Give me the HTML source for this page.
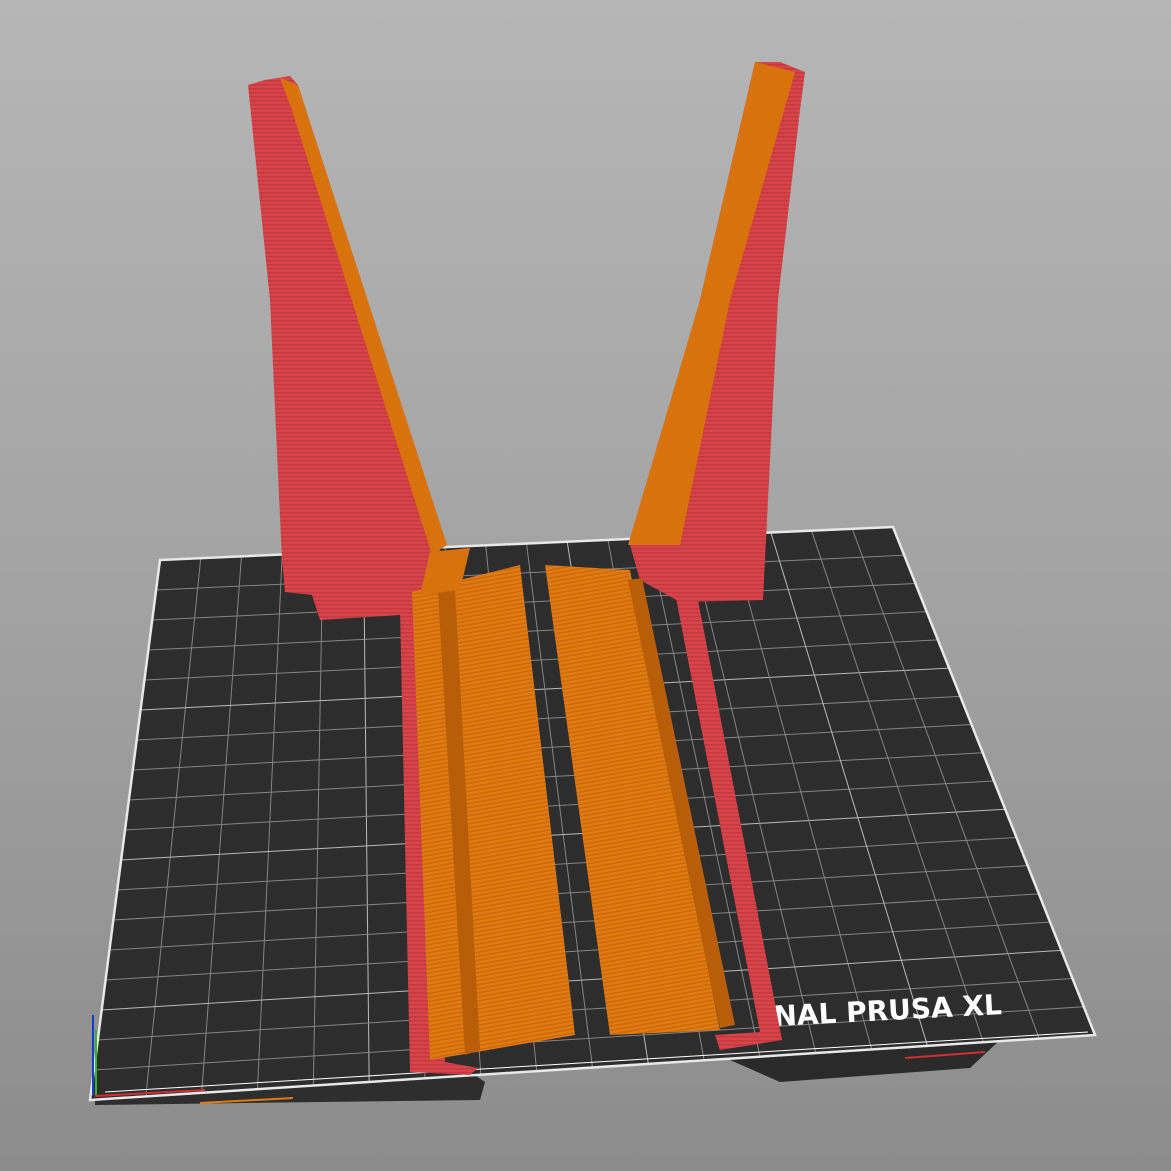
<!DOCTYPE html>
<html><head><meta charset="utf-8"><style>
html,body{margin:0;padding:0;width:1171px;height:1171px;overflow:hidden}
body{background:linear-gradient(#b6b6b6,#a3a3a3 50%,#8c8c8c)}
svg{display:block}
</style></head><body>
<svg id="s" width="1171" height="1171" viewBox="0 0 1171 1171" xmlns="http://www.w3.org/2000/svg">
<defs>
<pattern id="red" width="4" height="4" patternUnits="userSpaceOnUse"><rect width="4" height="4" fill="#d8444a"/><rect width="4" height="1.5" fill="#c23a40"/></pattern>
<pattern id="or" width="4" height="4" patternUnits="userSpaceOnUse" patternTransform="rotate(80)"><rect width="4" height="4" fill="#e07a12"/><rect width="1.5" height="4" fill="#c96a0a"/></pattern>
</defs>
<polygon points="95,1098 470,1072 485,1082 480,1100 95,1105" fill="#2e2e2e"/>
<polygon points="730,1060 1000,1040 970,1068 780,1082" fill="#2a2a2a"/>
<polygon points="160,560 893,527 1095,1035 90,1100" fill="#2d2d2d"/>
<g id="grid" stroke="#9a9a9a" stroke-width="1" opacity="0.8"></g>
<polygon points="160,560 893,527 1095,1035 90,1100" fill="none" stroke="#e8e8e8" stroke-width="2.5"/>
<line x1="105" y1="1092" x2="1088" y2="1032" stroke="#fff" stroke-width="1"/>
<text x="774" y="1026" fill="#fff" font-family="DejaVu Sans,Liberation Sans,sans-serif" font-weight="bold" font-size="28" transform="rotate(-3 774 1026)">NAL PRUSA XL</text>
<!-- left tower -->
<polygon points="248,85 265,80 290,76 298,85 440,545 440,560 430,600 400,615 320,620 312,595 285,592 282,560 270,300" fill="url(#red)"/>
<polygon points="280,78 298,85 447,545 432,555 292,110" fill="#d8720c"/>
<!-- right tower -->
<polygon points="755,62 780,62 805,72 800,110 778,300 763,600 680,602 640,580 630,545 700,300" fill="url(#red)"/>
<polygon points="755,62 795,72 730,300 680,545 628,545 700,300" fill="#d8720c"/>
<!-- left bar -->
<polygon points="400,610 432,595 445,1062 478,1068 470,1075 410,1072" fill="url(#red)"/>
<polygon points="412,592 520,565 575,1035 430,1060" fill="url(#or)"/>
<polygon points="438,592 455,590 480,1050 465,1055" fill="#b85e08"/>
<polygon points="430,552 470,548 460,590 420,595" fill="#d8720c"/>
<!-- right bar -->
<polygon points="676,598 698,600 782,1040 720,1050 715,1035 760,1032" fill="url(#red)"/>
<polygon points="545,565 630,570 720,1030 610,1035" fill="url(#or)"/>
<polygon points="628,580 642,578 735,1025 720,1028" fill="#b85e08"/>
<line x1="93" y1="1095" x2="93" y2="1015" stroke="#1a3bd0" stroke-width="2"/>
<line x1="96" y1="1095" x2="96" y2="1030" stroke="#2eb82e" stroke-width="2"/>
<line x1="95" y1="1096" x2="205" y2="1090" stroke="#d03030" stroke-width="2"/>
<line x1="200" y1="1103" x2="293" y2="1098" stroke="#e07a12" stroke-width="2"/>
<line x1="905" y1="1058" x2="985" y2="1052" stroke="#d03030" stroke-width="2"/>
</svg>
<script>
var g=document.getElementById('grid'),TL=[160,560],TR=[893,527],BR=[1095,1035],BL=[90,1100],N=18;
function L(a,b,t){return [a[0]+(b[0]-a[0])*t,a[1]+(b[1]-a[1])*t]}
for(var i=1;i<N;i++){var t=i/N;
var p=L(TL,TR,t),q=L(BL,BR,t);
var l=document.createElementNS('http://www.w3.org/2000/svg','line');
l.setAttribute('x1',p[0]);l.setAttribute('y1',p[1]);l.setAttribute('x2',q[0]);l.setAttribute('y2',q[1]);
if(i%5==0){l.setAttribute('stroke','#ddd')}g.appendChild(l);
p=L(TL,BL,t);q=L(TR,BR,t);
l=document.createElementNS('http://www.w3.org/2000/svg','line');
l.setAttribute('x1',p[0]);l.setAttribute('y1',p[1]);l.setAttribute('x2',q[0]);l.setAttribute('y2',q[1]);
if(i%5==0){l.setAttribute('stroke','#ddd')}g.appendChild(l);}
</script>
</body></html>
